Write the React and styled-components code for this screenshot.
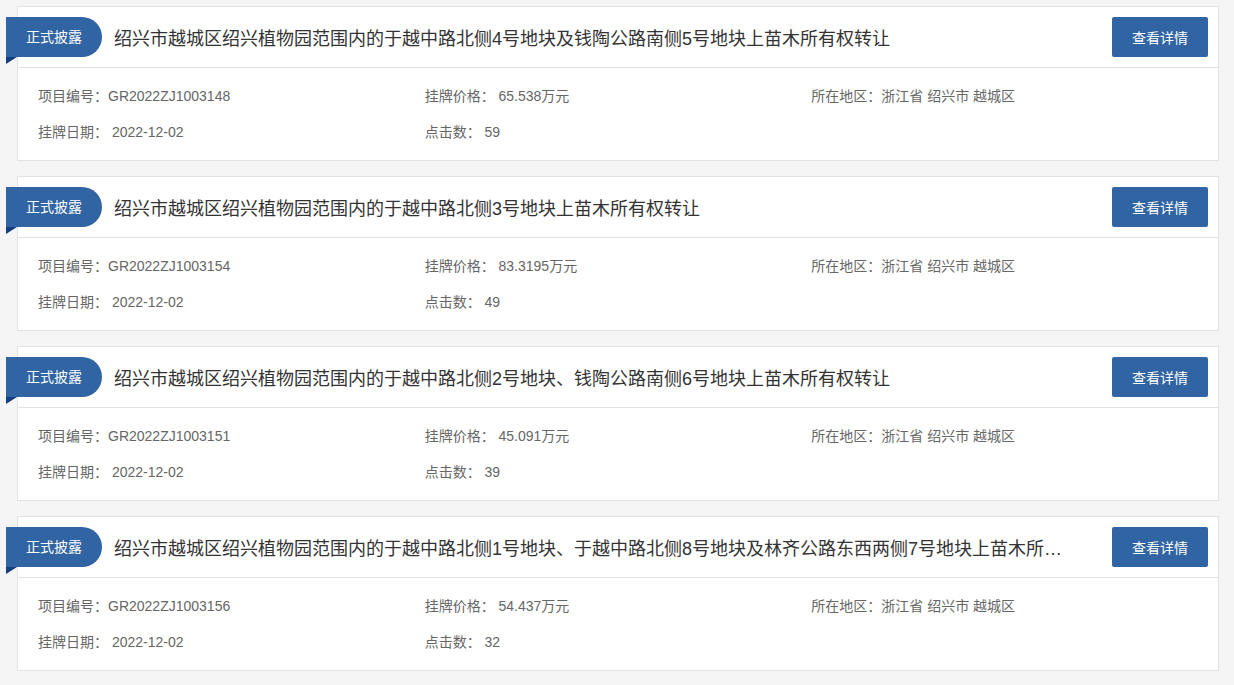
import React from "react";
import styled, { createGlobalStyle } from "styled-components";

const GlobalStyle = createGlobalStyle`
  html, body {
    margin: 0;
    padding: 0;
    background: #f5f5f5;
    font-family: "Liberation Sans", "Noto Sans CJK SC", sans-serif;
  }
`;

const List = styled.div`
  padding: 6px 15px 0 17px;
  display: flex;
  flex-direction: column;
  gap: 15px;
`;

const Card = styled.div`
  background: #fff;
  border: 1px solid #e3e3e3;
`;

const Header = styled.div`
  display: flex;
  align-items: center;
  height: 61px;
  padding: 10px 10px 11px 0;
  box-sizing: border-box;
  border-bottom: 1px solid #e3e3e3;
`;

const Badge = styled.div`
  position: relative;
  flex: none;
  height: 40px;
  line-height: 40px;
  margin-left: -12px;
  padding: 0 20px;
  background: #3064a3;
  color: #fff;
  font-size: 14px;
  border-radius: 0 20px 20px 0;

  &::after {
    content: "";
    position: absolute;
    left: 0;
    top: 40px;
    border-top: 7px solid #143f80;
    border-left: 11px solid transparent;
    transform: scaleX(-1);
  }
`;

const Title = styled.div`
  flex: 1;
  min-width: 0;
  margin: 0 40px 0 12px;
  font-size: 18px;
  color: #333;
  white-space: nowrap;
  overflow: hidden;
  text-overflow: ellipsis;
`;

const Button = styled.button`
  flex: none;
  width: 96px;
  height: 40px;
  border: none;
  border-radius: 2px;
  background: #3064a3;
  color: #fff;
  font-family: inherit;
  font-size: 14px;
  cursor: pointer;
`;

const Body = styled.div`
  display: grid;
  grid-template-columns: repeat(3, 1fr);
  padding: 10px 20px;
  font-size: 14px;
  line-height: 36px;
  color: #666;
`;

const Field = styled.div`
  white-space: nowrap;
`;

const items = [
  {
    title: "绍兴市越城区绍兴植物园范围内的于越中路北侧4号地块及钱陶公路南侧5号地块上苗木所有权转让",
    code: "GR2022ZJ1003148",
    price: "65.538万元",
    clicks: 59,
  },
  {
    title: "绍兴市越城区绍兴植物园范围内的于越中路北侧3号地块上苗木所有权转让",
    code: "GR2022ZJ1003154",
    price: "83.3195万元",
    clicks: 49,
  },
  {
    title: "绍兴市越城区绍兴植物园范围内的于越中路北侧2号地块、钱陶公路南侧6号地块上苗木所有权转让",
    code: "GR2022ZJ1003151",
    price: "45.091万元",
    clicks: 39,
  },
  {
    title: "绍兴市越城区绍兴植物园范围内的于越中路北侧1号地块、于越中路北侧8号地块及林齐公路东西两侧7号地块上苗木所有权转让",
    code: "GR2022ZJ1003156",
    price: "54.437万元",
    clicks: 32,
  },
];

function ProjectCard({ title, code, price, clicks }) {
  return (
    <Card>
      <Header>
        <Badge>正式披露</Badge>
        <Title>{title}</Title>
        <Button>查看详情</Button>
      </Header>
      <Body>
        <Field>项目编号：{code}</Field>
        <Field>挂牌价格： {price}</Field>
        <Field>所在地区：浙江省 绍兴市 越城区</Field>
        <Field>挂牌日期： 2022-12-02</Field>
        <Field>点击数： {clicks}</Field>
      </Body>
    </Card>
  );
}

export default function App() {
  return (
    <>
      <GlobalStyle />
      <List>
        {items.map((item) => (
          <ProjectCard key={item.code} {...item} />
        ))}
      </List>
    </>
  );
}
